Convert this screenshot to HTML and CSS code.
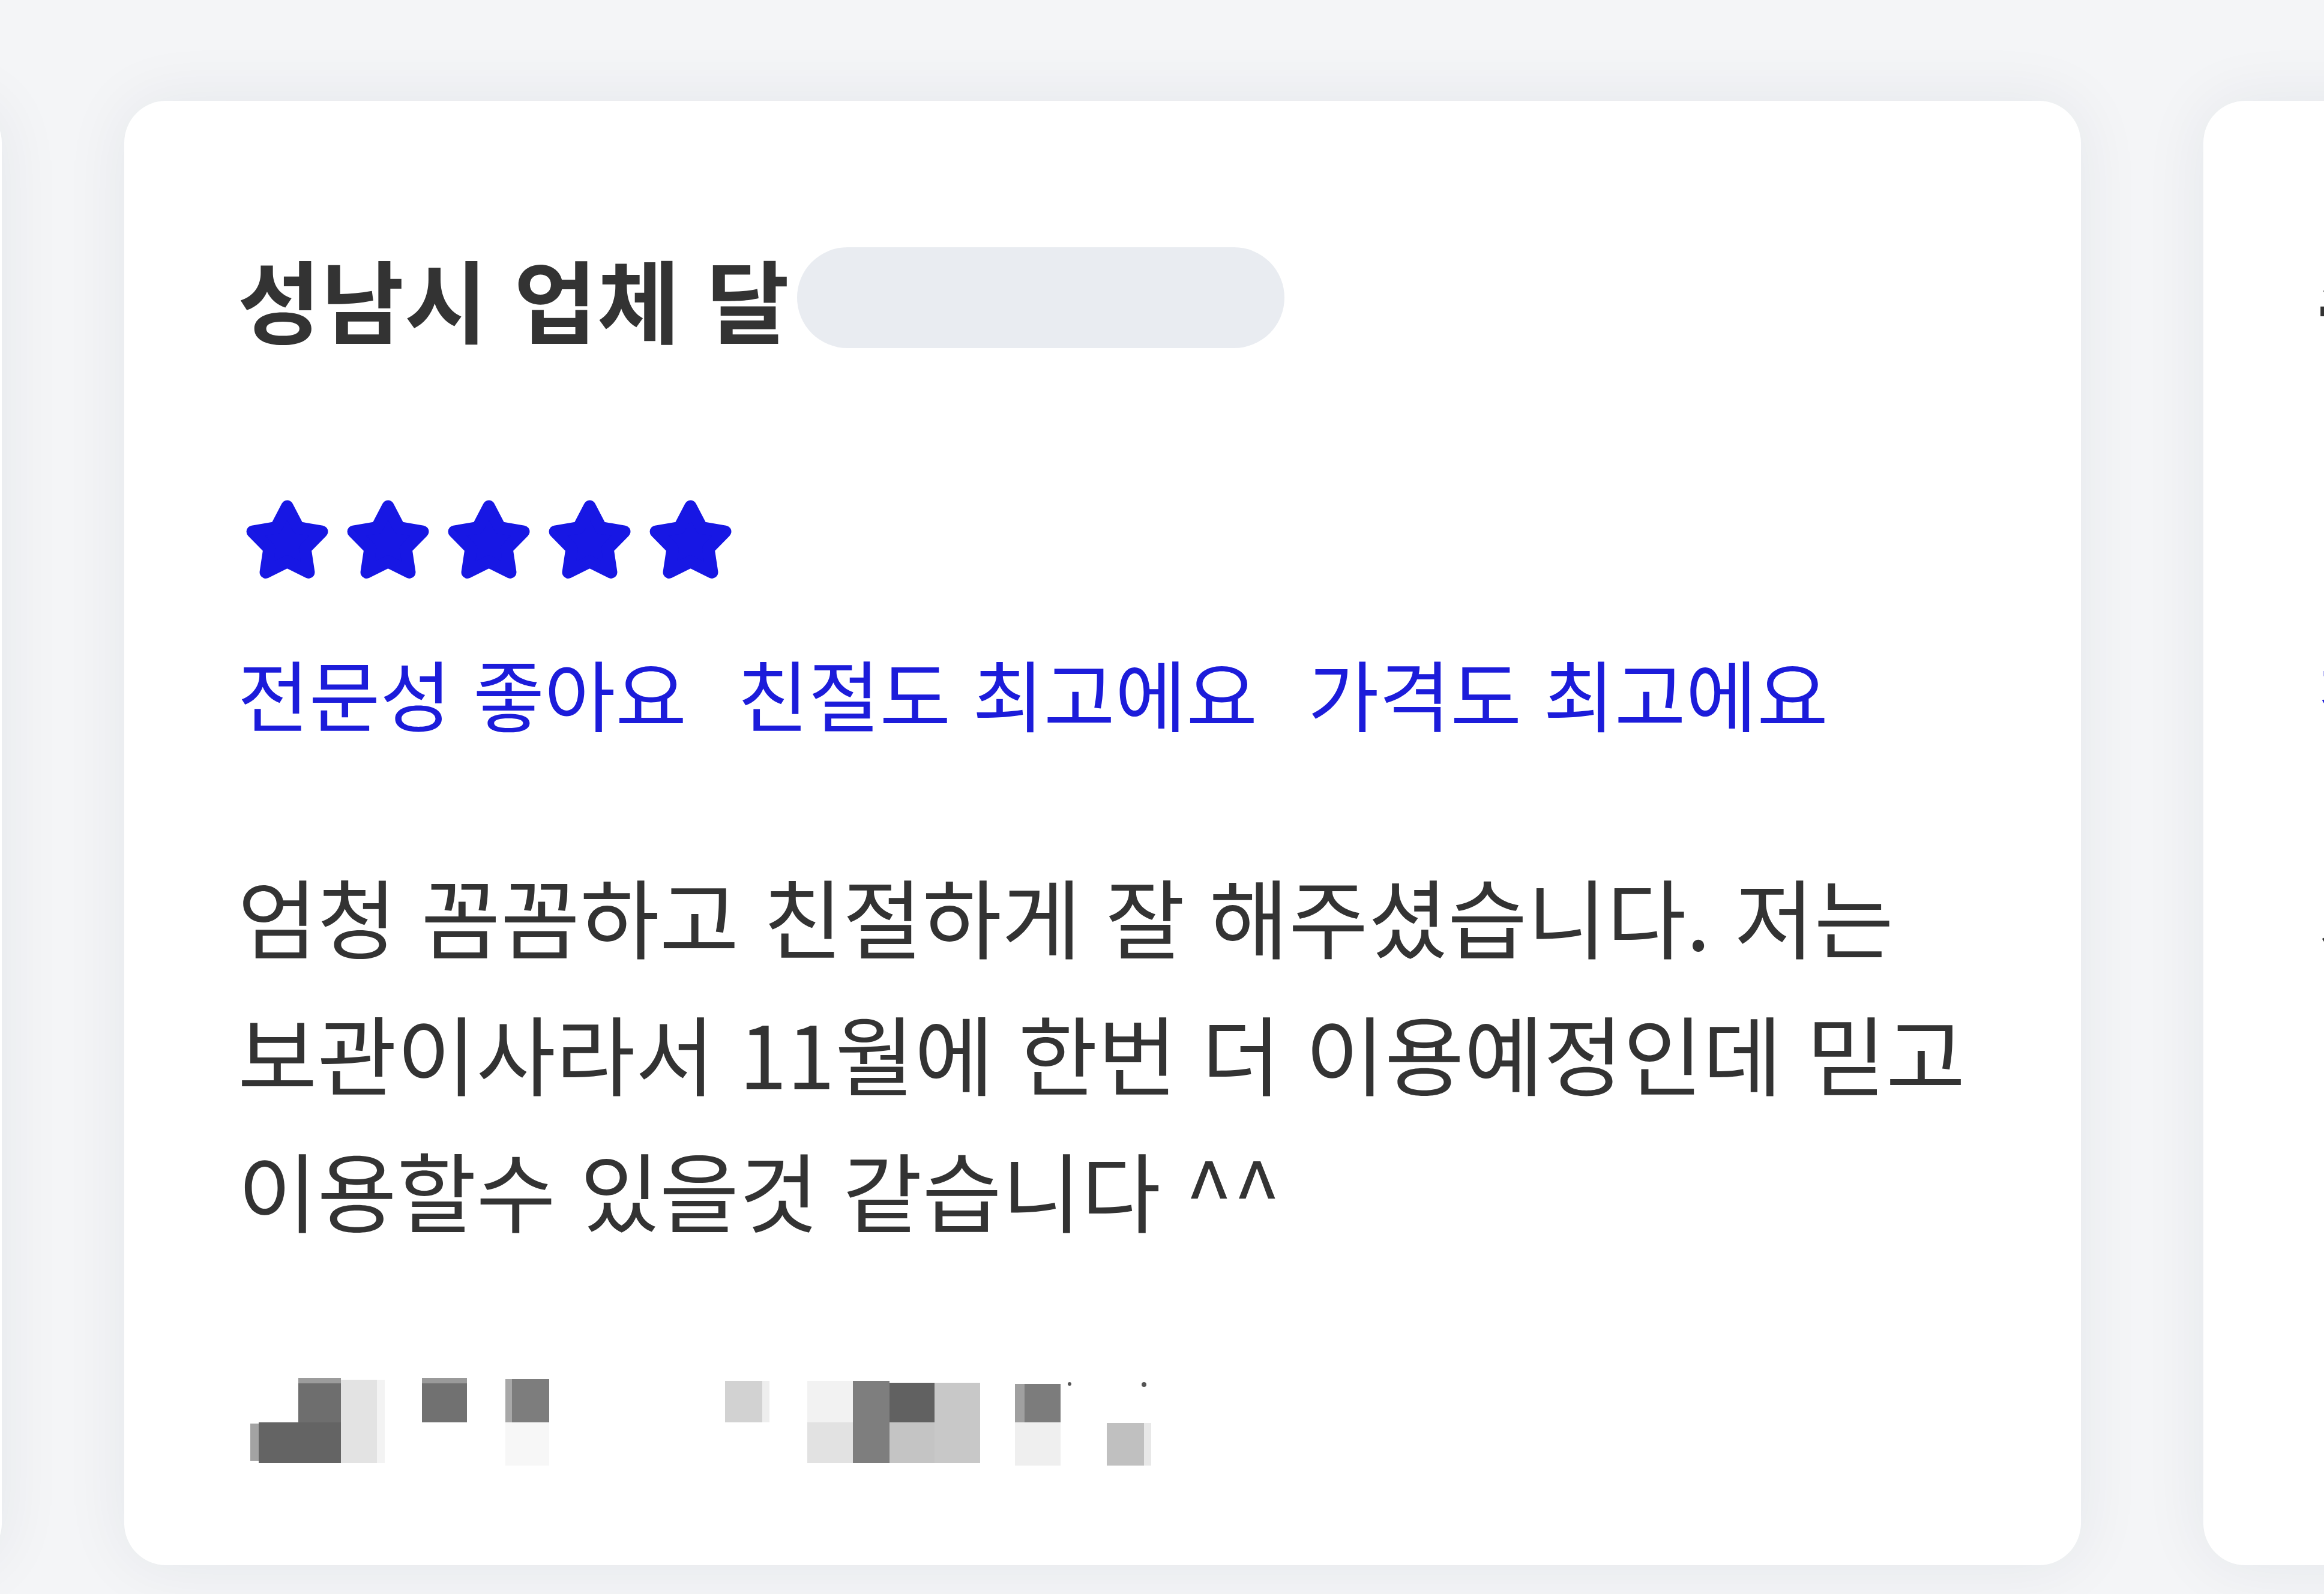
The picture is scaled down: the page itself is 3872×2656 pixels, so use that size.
FILE: index.html
```html
<!DOCTYPE html>
<html lang="ko">
<head>
  <meta charset="UTF-8" />
  <title>고객 후기</title>
  <meta name="viewport" content="width=device-width, initial-scale=1.0" />
  <link rel="stylesheet" href="styles.css">
</head>
<body>

  <!-- star shape, reused by every rating row -->
  <svg class="defs" width="0" height="0" aria-hidden="true">
    <symbol id="star" viewBox="-11.3 -11.8 22.6 21.6">
      <polygon points="0,-10 3.03,-4.17 9.51,-3.09 4.9,1.59 5.88,8.09 0,5.15 -5.88,8.09 -4.9,1.59 -9.51,-3.09 -3.03,-4.17"
               fill="currentColor" stroke="currentColor" stroke-width="3.4" stroke-linejoin="round" />
    </symbol>
  </svg>

  <section class="reviews">
    <div class="track">

      <article class="review-card">
        <div class="review-head">
          <h2 class="review-title">용인시 업체 김</h2>
          <span class="name-mask"></span>
        </div>
        <div class="stars">
          <svg class="star"><use href="#star" /></svg>
          <svg class="star"><use href="#star" /></svg>
          <svg class="star"><use href="#star" /></svg>
          <svg class="star"><use href="#star" /></svg>
          <svg class="star"><use href="#star" /></svg>
        </div>
        <ul class="tags">
          <li>시간 약속 잘 지켜요</li>
          <li>친절도 최고에요</li>
        </ul>
        <p class="review-text">처음부터 끝까지 깔끔하게 마무리해 주셔서 만족합니다.</p>
      </article>

      <article class="review-card">
        <div class="review-head">
          <h2 class="review-title">성남시 업체 달</h2>
          <span class="name-mask"></span>
        </div>
        <div class="stars">
          <svg class="star"><use href="#star" /></svg>
          <svg class="star"><use href="#star" /></svg>
          <svg class="star"><use href="#star" /></svg>
          <svg class="star"><use href="#star" /></svg>
          <svg class="star"><use href="#star" /></svg>
        </div>
        <ul class="tags">
          <li>전문성 좋아요</li>
          <li>친절도 최고에요</li>
          <li>가격도 최고에요</li>
        </ul>
        <p class="review-text">엄청 꼼꼼하고 친절하게 잘 해주셨습니다. 저는 보관이사라서 11월에 한번 더 이용예정인데 믿고 이용할수 있을것 같습니다 ^^</p>

        <!-- author name, pixelated -->
        <svg class="author-mosaic" width="1501" height="146" viewBox="0 0 1501 146" aria-label="작성자 이름 가림">
          <rect x="80" y="0" width="71" height="74" fill="#6e6e6e" />
          <rect x="80" y="0" width="71" height="9" fill="#9c9c9c" />
          <rect x="14" y="74" width="137" height="68" fill="#646464" />
          <rect x="0" y="76" width="14" height="62" fill="#a3a3a3" />
          <rect x="151" y="3" width="60" height="139" fill="#e3e3e3" />
          <rect x="211" y="3" width="13" height="139" fill="#f3f3f3" />
          <rect x="286" y="0" width="75" height="74" fill="#717171" />
          <rect x="286" y="0" width="75" height="9" fill="#9a9a9a" />
          <rect x="425" y="2" width="73" height="72" fill="#7d7d7d" />
          <rect x="425" y="2" width="11" height="72" fill="#a8a8a8" />
          <rect x="425" y="74" width="73" height="72" fill="#f7f7f7" />
          <rect x="791" y="5" width="62" height="69" fill="#d2d2d2" />
          <rect x="853" y="5" width="12" height="69" fill="#eeeeee" />
          <rect x="928" y="5" width="76" height="69" fill="#f2f2f2" />
          <rect x="928" y="74" width="76" height="68" fill="#e2e2e2" />
          <rect x="1004" y="5" width="61" height="137" fill="#7e7e7e" />
          <rect x="1065" y="8" width="75" height="66" fill="#616161" />
          <rect x="1065" y="74" width="75" height="68" fill="#c4c4c4" />
          <rect x="1140" y="8" width="76" height="134" fill="#c8c8c8" />
          <rect x="1274" y="10" width="76" height="64" fill="#7c7c7c" />
          <rect x="1274" y="10" width="16" height="64" fill="#a0a0a0" />
          <rect x="1274" y="74" width="76" height="72" fill="#efefef" />
          <rect x="1427" y="75" width="74" height="71" fill="#c0c0c0" />
          <rect x="1489" y="75" width="12" height="71" fill="#e8e8e8" />
          <circle cx="1365" cy="10" r="3" fill="#555" />
          <circle cx="1489" cy="11" r="4" fill="#555" />
        </svg>
      </article>

      <article class="review-card">
        <div class="review-head">
          <h2 class="review-title">수원시 업체 박</h2>
          <span class="name-mask"></span>
        </div>
        <div class="stars">
          <svg class="star"><use href="#star" /></svg>
          <svg class="star"><use href="#star" /></svg>
          <svg class="star"><use href="#star" /></svg>
          <svg class="star"><use href="#star" /></svg>
          <svg class="star"><use href="#star" /></svg>
        </div>
        <ul class="tags">
          <li>친절도 최고에요</li>
          <li>가격도 최고에요</li>
        </ul>
        <p class="review-text">기사님들이 빠르고 꼼꼼하게 작업해 주셨어요. 다음에도 꼭 다시 이용하고 싶습니다.</p>
      </article>

    </div>
  </section>

</body>
</html>
```

FILE: styles.css
```css
body {
  margin: 0;
  background: #f4f5f7;
  font-family: "Noto Sans CJK KR", "Noto Sans", sans-serif;
  color: #333;
  overflow: hidden;
}

.defs {
  position: absolute;
  width: 0;
  height: 0;
}

.reviews {
  padding-top: 168px;
  height: 2488px;
}

.track {
  display: flex;
  gap: 204px;
  margin-left: -3257px;
}

.review-card {
  flex: 0 0 3260px;
  height: 2440px;
  box-sizing: border-box;
  padding: 244px 110px 0 189px;
  background: #ffffff;
  border-radius: 70px;
  box-shadow: 0 0 110px rgba(30, 40, 70, 0.07);
}

.review-head {
  display: flex;
  align-items: center;
  height: 168px;
}

.review-title {
  margin: 0;
  font-size: 150px;
  font-weight: 700;
  letter-spacing: 1px;
  line-height: 1;
  color: #333;
}

.name-mask {
  width: 812px;
  height: 168px;
  margin-left: 12px;
  border-radius: 84px;
  background: #e9ecf1;
}

.stars {
  display: flex;
  gap: 31px;
  margin-top: 253px;
  padding-left: 14px;
  color: #1717e4;
}

.star {
  width: 137px;
  height: 131px;
}

.tags {
  display: flex;
  gap: 84px;
  margin: 118px 0 0;
  padding: 0;
  list-style: none;
  font-size: 129px;
  line-height: 144px;
  color: #1c1cda;
}

.review-text {
  margin: 184px 0 0;
  font-size: 144px;
  line-height: 228px;
  word-break: keep-all;
  color: #333;
}

.author-mosaic {
  display: block;
  margin-top: 202px;
  margin-left: 21px;
}
```
